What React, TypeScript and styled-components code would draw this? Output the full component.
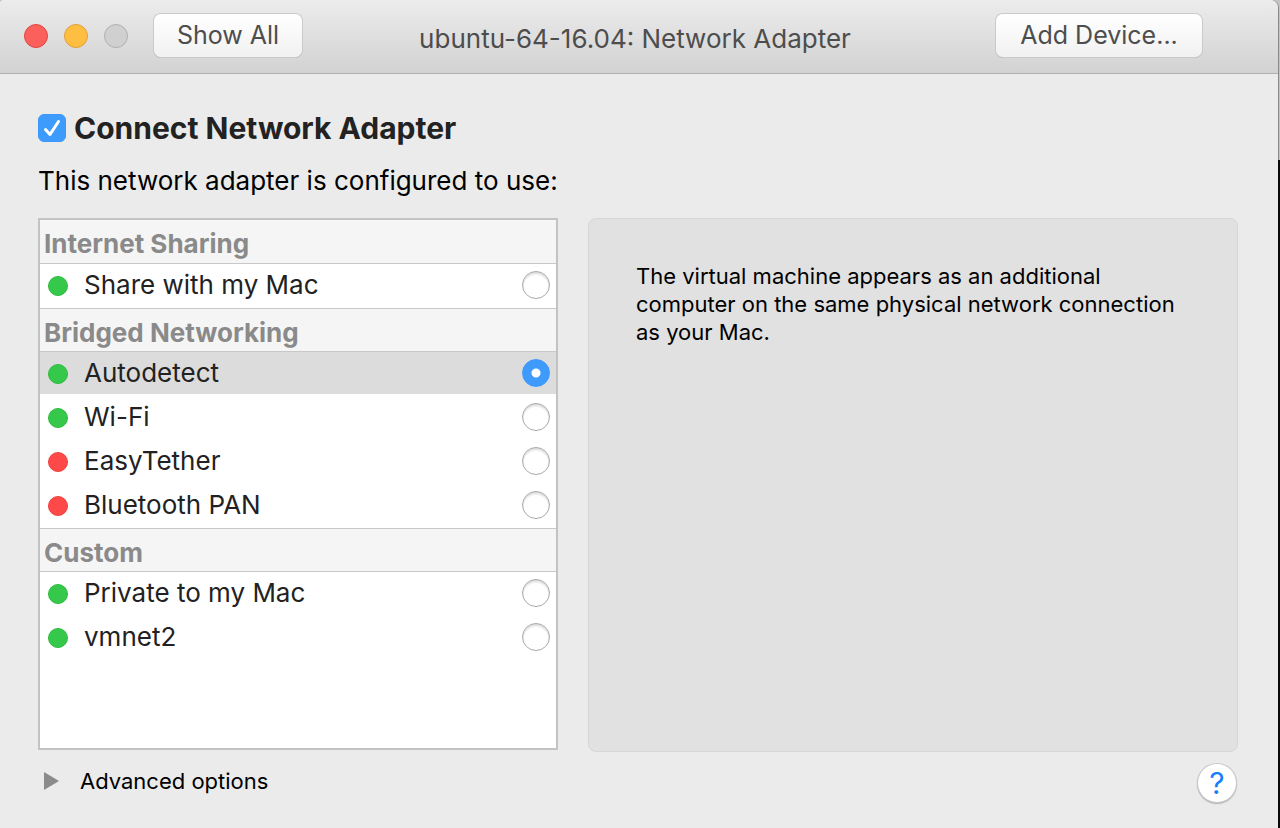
import React, { useState } from "react";
import styled, { createGlobalStyle } from "styled-components";

const Global = createGlobalStyle`
  * { box-sizing: border-box; }
  body { margin: 0; background: #ebebeb; font-family: Inter, "Liberation Sans", sans-serif; }
  button, input { font-family: inherit; margin: 0; }
`;

const Desktop = styled.div`
  min-height: 100vh;
  display: flex;
  padding-right: 2px;
  background: linear-gradient(#c4c4c4 160px, #0c0c0c 160px);
`;

const Window = styled.main`
  flex: 1;
  min-width: 0;
  display: flex;
  flex-direction: column;
  border-radius: 4px 8px 0 0;
  overflow: hidden;
  background: #ebebeb;
  box-shadow: 1px 0 0 rgba(0, 0, 0, 0.3);
`;

const TitleBar = styled.header`
  display: grid;
  grid-template-columns: 1fr auto 1fr;
  align-items: center;
  height: 74px;
  padding: 0 32px 2px 24px;
  background: linear-gradient(#ececec, #d2d2d2);
  border-bottom: 1px solid #b0b0b0;
`;

const Controls = styled.div`
  display: flex;
  align-items: center;
  gap: 16px;
`;

const Light = styled.button<{ $fill: string; $edge: string }>`
  width: 24px;
  height: 24px;
  padding: 0;
  border-radius: 50%;
  border: 1px solid ${(p) => p.$edge};
  background: ${(p) => p.$fill};
`;

const PushButton = styled.button<{ $width: number }>`
  width: ${(p) => p.$width}px;
  height: 43px;
  margin-left: 10px;
  padding: 0 0 1px;
  border: 0;
  border-radius: 7px;
  background: linear-gradient(#ffffff, #f1f1f1);
  box-shadow: 0 0 0 1px #cacaca, 0 1px 0 0 #a4a4a4;
  color: #4d4d4d;
  font-size: 25px;
  line-height: 32px;
  white-space: nowrap;
`;

const Title = styled.h1`
  margin: 0;
  padding-top: 6px;
  color: #4d4d4d;
  font-size: 26px;
  line-height: 32px;
  font-weight: 400;
  white-space: nowrap;
`;

const RightControls = styled.div`
  display: flex;
  justify-content: flex-end;
  padding-right: 44px;
`;

const Content = styled.div`
  flex: 1;
  display: flex;
  flex-direction: column;
  padding: 36px 40px 24px 38px;
`;

const ConnectLabel = styled.label`
  display: flex;
  align-items: center;
  gap: 8px;
  height: 36px;
  color: #222;
  font-size: 30px;
  line-height: 34px;
  font-weight: 700;
`;

const CheckWrap = styled.span`
  display: grid;
  width: 28px;
  height: 28px;
  > * { grid-area: 1 / 1; }
`;

const CheckBox = styled.input`
  appearance: none;
  width: 28px;
  height: 28px;
  border-radius: 6px;
  border: 1px solid #a8a8a8;
  background: #fff;
  &:checked { border-color: #3b99fc; background: #3f9bfb; }
  &:not(:checked) + svg { display: none; }
`;

const CheckMark = styled.svg`
  pointer-events: none;
`;

const Caption = styled.p`
  margin: 18px 0 20px;
  color: #000;
  font-size: 26px;
  line-height: 34px;
`;

const Columns = styled.div`
  flex: 1;
  display: grid;
  grid-template-columns: minmax(0, 520fr) minmax(0, 650fr);
  column-gap: 30px;
`;

const List = styled.fieldset`
  min-width: 0;
  margin: 0 0 2px;
  padding: 0;
  border: 2px solid #c3c3c3;
  background: #fff;
`;

const Group = styled.div`
  &:not(:first-child) > h2 { border-top: 1px solid #c8c8c8; }
`;

const GroupTitle = styled.h2`
  height: 44px;
  margin: 0;
  padding: 5px 4px 0;
  background: #f5f5f5;
  border-bottom: 1px solid #c8c8c8;
  color: #8a8a8a;
  font-size: 26px;
  line-height: 38px;
  font-weight: 700;
`;

const Row = styled.label<{ $selected: boolean }>`
  display: flex;
  align-items: center;
  height: 44px;
  padding: 0 6px 0 8px;
  border-bottom: 2px solid transparent;
  background: ${(p) => (p.$selected ? "#dcdcdc" : "#fff")};
  background-clip: padding-box;
  color: #222;
  font-size: 26px;
  line-height: 32px;
`;

const Status = styled.span<{ $up: boolean }>`
  width: 20px;
  height: 20px;
  margin: 2px 16px 0 0;
  border-radius: 50%;
  border: 1px solid ${(p) => (p.$up ? "#2fbb43" : "#ef4040")};
  background: ${(p) => (p.$up ? "#35c84a" : "#fd4a48")};
`;

const RowName = styled.span`
  flex: 1;
`;

const Radio = styled.input`
  appearance: none;
  width: 28px;
  height: 28px;
  border-radius: 50%;
  border: 1px solid #a8a8a8;
  background: #fff;
  box-shadow: inset 0 2px 2px #dcdcdc;
  &:checked {
    border-color: #3b99fc;
    background: radial-gradient(circle, #fff 4px, #3f9bfb 5px);
    box-shadow: none;
  }
`;

const Description = styled.section`
  padding: 43px 47px;
  border: 1px solid #d6d6d6;
  border-radius: 8px;
  background: #e1e1e1;
  color: #000;
  font-size: 22px;
  line-height: 28px;
  p { margin: 0; }
`;

const Footer = styled.footer`
  display: flex;
  align-items: flex-start;
  justify-content: space-between;
  padding-top: 12px;
`;

const Disclosure = styled.button`
  display: flex;
  align-items: center;
  gap: 21px;
  height: 34px;
  padding: 0 0 0 6px;
  border: 0;
  background: none;
  color: #000;
  font-size: 22px;
`;

const Help = styled.button`
  width: 38px;
  height: 38px;
  margin: 0 2px 2px 0;
  padding: 0;
  border: 0;
  border-radius: 50%;
  background: #fff;
  box-shadow: 0 0 0 1px #c9c9c9, 0 1px 1px 1px #b4b4b4;
  color: #147efb;
  font-size: 30px;
  line-height: 38px;
`;

const groups = [
  { title: "Internet Sharing", items: [{ name: "Share with my Mac", up: true }] },
  {
    title: "Bridged Networking",
    items: [
      { name: "Autodetect", up: true },
      { name: "Wi-Fi", up: true },
      { name: "EasyTether", up: false },
      { name: "Bluetooth PAN", up: false },
    ],
  },
  {
    title: "Custom",
    items: [
      { name: "Private to my Mac", up: true },
      { name: "vmnet2", up: true },
    ],
  },
];

export default function App() {
  const [connected, setConnected] = useState(true);
  const [selected, setSelected] = useState("Autodetect");

  return (
    <Desktop>
      <Global />
      <Window>
        <TitleBar>
          <Controls>
            <Light aria-label="Close" $fill="#fc605c" $edge="#e2463f" />
            <Light aria-label="Minimize" $fill="#fdbe41" $edge="#e1a03a" />
            <Light aria-label="Zoom" $fill="#d0d0d0" $edge="#b0b0b0" />
            <PushButton $width={148}>Show All</PushButton>
          </Controls>
          <Title>ubuntu-64-16.04: Network Adapter</Title>
          <RightControls>
            <PushButton $width={206}>Add Device...</PushButton>
          </RightControls>
        </TitleBar>
        <Content>
          <ConnectLabel>
            <CheckWrap>
              <CheckBox
                type="checkbox"
                checked={connected}
                onChange={(e) => setConnected(e.target.checked)}
              />
              <CheckMark width="28" height="28" viewBox="0 0 28 28" fill="none">
                <path
                  d="M7.5 15.5 L12 20.5 L20.5 7.5"
                  stroke="#fff"
                  strokeWidth="3"
                  strokeLinecap="round"
                  strokeLinejoin="round"
                />
              </CheckMark>
            </CheckWrap>
            Connect Network Adapter
          </ConnectLabel>
          <Caption>This network adapter is configured to use:</Caption>
          <Columns>
            <List aria-label="Network connection">
              {groups.map((g) => (
                <Group key={g.title}>
                  <GroupTitle>{g.title}</GroupTitle>
                  {g.items.map((it) => (
                    <Row key={it.name} $selected={selected === it.name}>
                      <Status $up={it.up} />
                      <RowName>{it.name}</RowName>
                      <Radio
                        type="radio"
                        name="network"
                        checked={selected === it.name}
                        onChange={() => setSelected(it.name)}
                      />
                    </Row>
                  ))}
                </Group>
              ))}
            </List>
            <Description>
              <p>
                The virtual machine appears as an additional computer on the same physical network
                connection as your Mac.
              </p>
            </Description>
          </Columns>
          <Footer>
            <Disclosure>
              <svg width="15" height="18" viewBox="0 0 15 18">
                <path d="M0 0 L15 9 L0 18 Z" fill="#8b8b8b" />
              </svg>
              Advanced options
            </Disclosure>
            <Help aria-label="Help">?</Help>
          </Footer>
        </Content>
      </Window>
    </Desktop>
  );
}
